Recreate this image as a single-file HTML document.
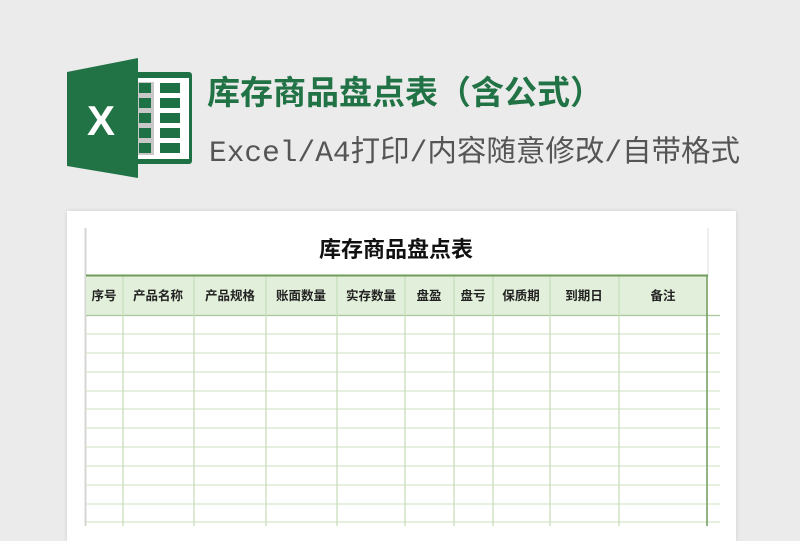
<!DOCTYPE html>
<html><head><meta charset="utf-8"><style>
body{margin:0;width:800px;height:526px;background:#ebebeb;position:relative;overflow:hidden;font-family:"Liberation Sans","Noto Sans CJK SC",sans-serif}
.t1{position:absolute;left:207px;top:69px;font-size:33px;font-weight:bold;color:#217346;white-space:nowrap;line-height:48px}
.t2{position:absolute;left:209px;top:131px;font-size:29.5px;color:#555;white-space:nowrap;line-height:44px;font-family:"Liberation Mono","Noto Sans CJK SC",monospace}
.card{position:absolute;left:67px;top:211px;width:669px;height:330px;background:#fff;box-shadow:0 0 4px rgba(0,0,0,.12)}
.cap{position:absolute;left:85px;top:235px;width:622px;text-align:center;font-size:22px;font-weight:bold;color:#111;line-height:30px}
</style></head><body>
<svg style="position:absolute;left:60px;top:50px" width="140" height="140" viewBox="60 50 140 140">
<rect x="127" y="72" width="65" height="92" rx="3" fill="#1e7145"/>
<rect x="131" y="78" width="58" height="81" fill="#fff"/>
<rect x="137" y="82" width="17" height="73" fill="#c8c8c8"/>
<g fill="#1e7145">
<rect x="139" y="83" width="12" height="10"/><rect x="160" y="83" width="20" height="10"/>
<rect x="139" y="98" width="12" height="10"/><rect x="160" y="98" width="20" height="10"/>
<rect x="139" y="113" width="12" height="10"/><rect x="160" y="113" width="20" height="10"/>
<rect x="139" y="128" width="12" height="10"/><rect x="160" y="128" width="20" height="10"/>
<rect x="139" y="143" width="12" height="10"/><rect x="160" y="143" width="20" height="10"/>
</g>
<path d="M67 72 L138 58 L138 178 L67 166 Z" fill="#217346"/>
<text x="101" y="135" font-family="Liberation Sans" font-weight="bold" font-size="42" fill="#fff" text-anchor="middle">X</text>
</svg>
<div class="t1">库存商品盘点表（含公式）</div>
<div class="t2">Excel/A4打印/内容随意修改/自带格式</div>
<div class="card"></div>
<div class="cap">库存商品盘点表</div>
<svg style="position:absolute;left:0;top:0" width="800" height="526">
<line x1="85.5" y1="228" x2="85.5" y2="526" stroke="#d6d6d6" stroke-width="2"/>
<line x1="708" y1="228" x2="708" y2="276" stroke="#ddd"/>
<rect x="86" y="276" width="621" height="39" fill="#e2efda"/>
<g stroke="#d5e6cc" stroke-width="1.3">
<line x1="86" y1="334" x2="720" y2="334"/><line x1="86" y1="353" x2="720" y2="353"/>
<line x1="86" y1="372" x2="720" y2="372"/><line x1="86" y1="391" x2="720" y2="391"/>
<line x1="86" y1="409" x2="720" y2="409"/><line x1="86" y1="428" x2="720" y2="428"/>
<line x1="86" y1="447" x2="720" y2="447"/><line x1="86" y1="466" x2="720" y2="466"/>
<line x1="86" y1="485" x2="720" y2="485"/><line x1="86" y1="504" x2="720" y2="504"/>
<line x1="86" y1="522" x2="720" y2="522"/>
</g>
<line x1="86" y1="315.5" x2="720" y2="315.5" stroke="#a9c79a" stroke-width="1.2"/>
<g stroke="#c5dcb8" stroke-width="1.2">
<line x1="123" y1="276" x2="123" y2="526"/><line x1="194" y1="276" x2="194" y2="526"/>
<line x1="266" y1="276" x2="266" y2="526"/><line x1="337" y1="276" x2="337" y2="526"/>
<line x1="405" y1="276" x2="405" y2="526"/><line x1="454" y1="276" x2="454" y2="526"/>
<line x1="493" y1="276" x2="493" y2="526"/><line x1="550" y1="276" x2="550" y2="526"/>
<line x1="619" y1="276" x2="619" y2="526"/>
</g>
<line x1="86" y1="275.5" x2="708" y2="275.5" stroke="#6f9c5a" stroke-width="2"/>
<line x1="707" y1="275" x2="707" y2="526" stroke="#6f9c5a" stroke-width="1.5"/>
<g font-family="Liberation Sans,Noto Sans CJK SC,sans-serif" font-size="12.5" font-weight="bold" fill="#222" text-anchor="middle">
<text x="104" y="300">序号</text><text x="158" y="300">产品名称</text><text x="230" y="300">产品规格</text>
<text x="301" y="300">账面数量</text><text x="371" y="300">实存数量</text><text x="429" y="300">盘盈</text>
<text x="473" y="300">盘亏</text><text x="521" y="300">保质期</text><text x="584" y="300">到期日</text>
<text x="663" y="300">备注</text>
</g>
</svg>
</body></html>
